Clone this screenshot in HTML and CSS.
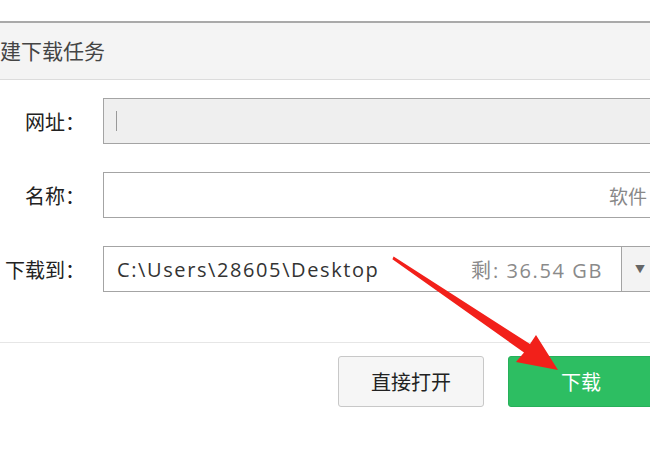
FILE: index.html
```html
<!DOCTYPE html>
<html lang="zh-CN">
<head>
  <meta charset="UTF-8" />
  <title>新建下载任务</title>
  <link rel="stylesheet" href="styles.css">
</head>
<body>

  <div class="dialog">
    <!-- Title bar -->
    <div class="title-bar">新建下载任务</div>

    <!-- Form -->
    <div class="form">
      <div class="row">
        <label>网址：</label>
        <div class="field url"><span class="caret"></span></div>
      </div>
      <div class="row">
        <label>名称：</label>
        <div class="field name"><span class="name-text">软件</span></div>
      </div>
      <div class="row">
        <label>下载到：</label>
        <div class="field path">
          <span class="path-text">C:\Users\28605\Desktop</span>
          <span class="free">剩: 36.54 GB</span>
        </div>
        <div class="drop">▼</div>
      </div>
    </div>

    <!-- Buttons -->
    <div class="actions">
      <button class="btn">直接打开</button>
      <button class="btn primary">下载</button>
    </div>
  </div>

  <!-- Red arrow drawn on top -->
  <svg class="arrow" width="650" height="450" viewBox="0 0 650 450">
    <polygon fill="#f2201a" points="393.6,256.6 530,344 536,335 558,370 516,362 524,352.5 392.4,259.2"/>
  </svg>

</body>
</html>
```

FILE: styles.css
```css
* { margin: 0; padding: 0; box-sizing: border-box; }
html, body { width: 650px; height: 450px; overflow: hidden; }
body { background: #fff; font-family: "Microsoft YaHei", "Noto Sans CJK SC", sans-serif; color: #333; position: relative; }

.dialog { width: 780px; padding-top: 21px; }

.title-bar {
  height: 59px; margin-left: -21px;
  background: #f4f4f4; border-top: 2px solid #a9a9a9; border-bottom: 1px solid #dcdcdc;
  font-size: 21px; line-height: 54px; color: #444;
}

.form { padding-top: 18px; }
.row { display: flex; align-items: center; height: 46px; margin-bottom: 28px; }
.row:last-child { margin-bottom: 0; }
.row label { width: 85px; text-align: right; font-size: 20px; color: #222; margin-right: 18px; flex-shrink: 0; }

.field { height: 46px; border: 1px solid #a4a4a4; flex: 1; display: flex; align-items: center; font-size: 19px; }
.field.url { background: #efefef; }
.caret { width: 1px; height: 20px; background: #999; margin-left: 12px; }
.name-text { color: #888; margin-left: 505px; }

.field.path { flex: 0 0 518px; padding: 0 0 0 13px; justify-content: space-between; border-right: none; }
.path-text, .free { font-family: "Open Sans", "Noto Sans", sans-serif; font-size: 20px; letter-spacing: 1.6px; }
.path-text { color: #333; }
.free { color: #8a8a8a; margin-right: 18px; }
.drop { height: 46px; flex: 1; border: 1px solid #a4a4a4; background: #f3f3f3; color: #666; font-size: 10px; line-height: 44px; padding-left: 13px; }

.actions { margin-top: 50px; border-top: 1px solid #e6e6e6; padding: 13px 0 0 338px; display: flex; gap: 24px; }
.btn { width: 146px; height: 51px; border-radius: 3px; font-family: inherit; font-size: 20px; cursor: pointer; }
.btn { background: #f6f6f6; border: 1px solid #c8c8c8; color: #222; }
.btn.primary { background: #2dbe62; border: 1px solid #27b05a; color: #fff; }

.arrow { position: absolute; left: 0; top: 0; }
```
